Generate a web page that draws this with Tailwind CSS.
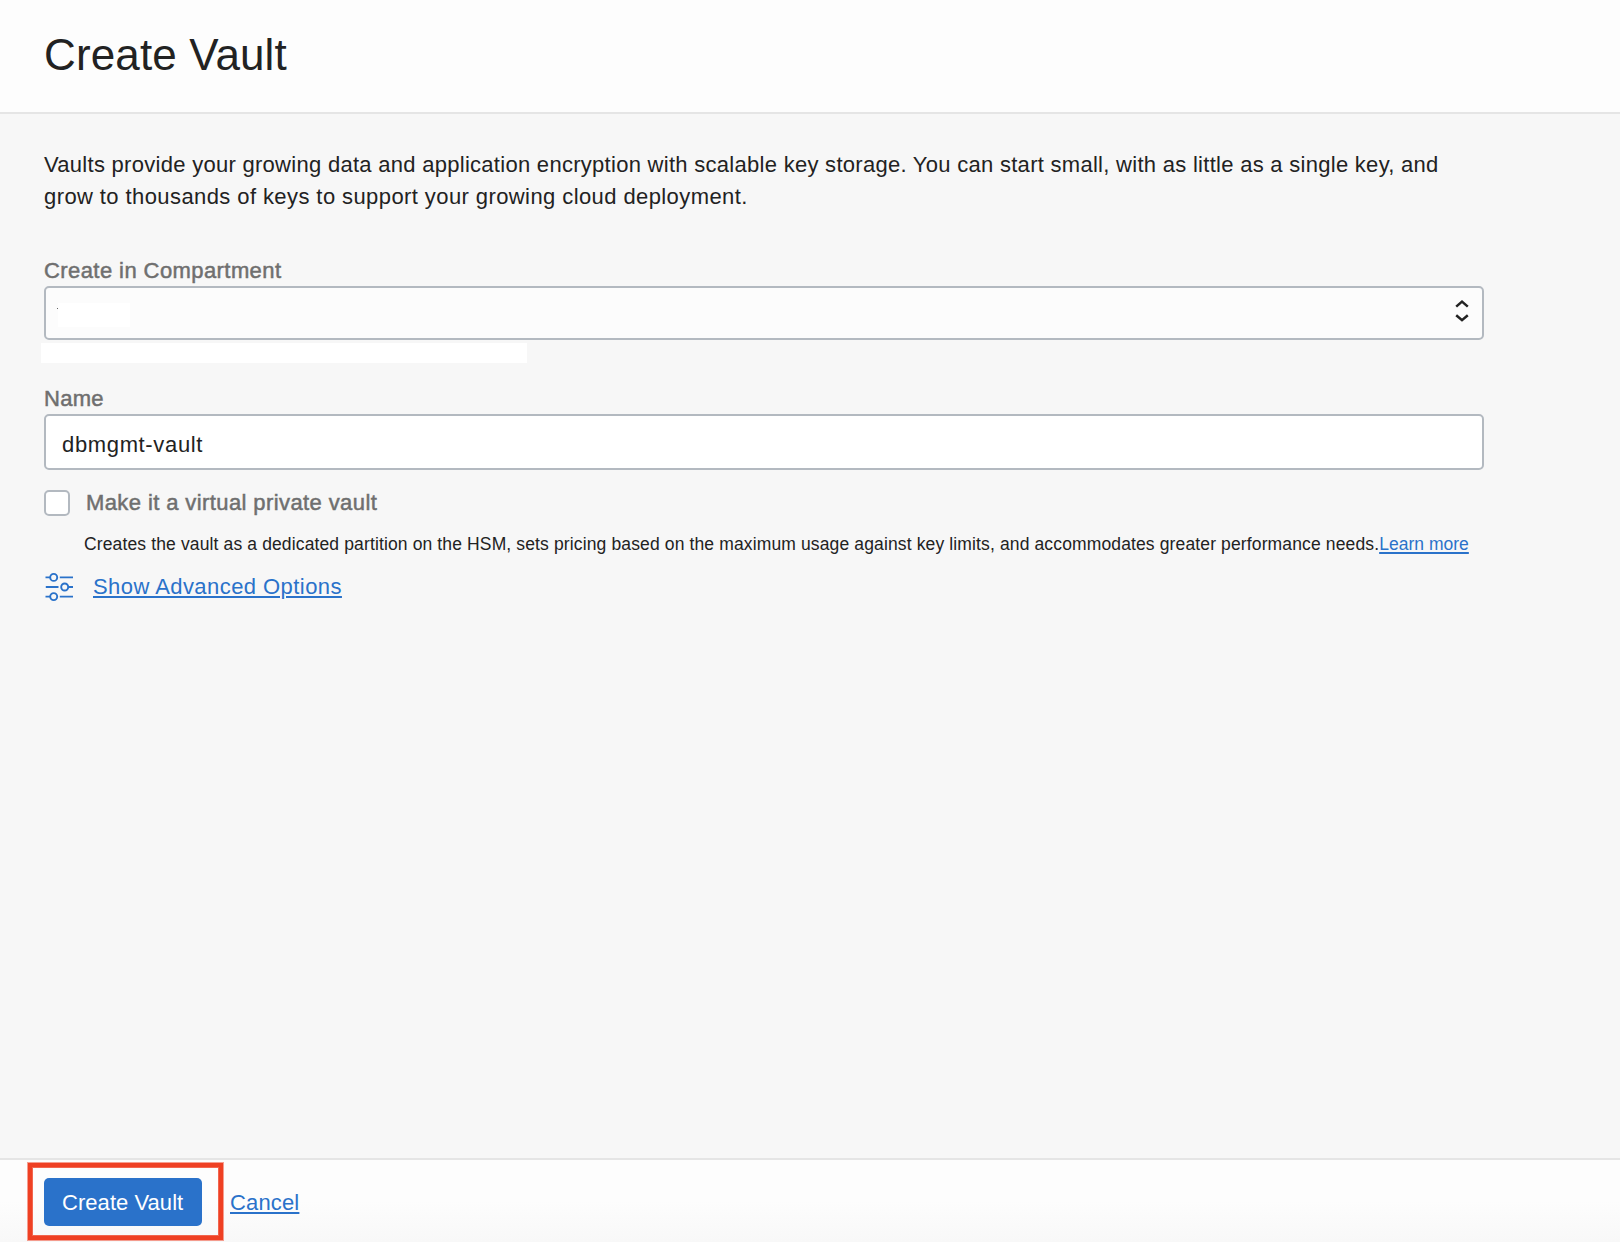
<!DOCTYPE html>
<html lang="en">
<head>
<meta charset="utf-8">
<title>Create Vault</title>
<script src="https://cdn.jsdelivr.net/npm/@tailwindcss/browser@4"></script>
</head>
<body class="relative flex h-[1242px] w-[1620px] flex-col overflow-hidden bg-[#f7f7f7] font-['Liberation_Sans',Arial,sans-serif] text-[22px] leading-8 text-[#222]">
  <header class="h-[114px] shrink-0 border-b-2 border-[#e5e5e5] bg-[#fdfdfd] pt-[31px] pl-11">
    <h1 class="text-[44px] leading-12 tracking-[0.13px]">Create Vault</h1>
  </header>

  <main class="flex-1 pt-[35px] pl-11">
    <p class="whitespace-nowrap"><span class="tracking-[0.283px]">Vaults provide your growing data and application encryption with scalable key storage. You can start small, with as little as a single key, and</span><br><span class="tracking-[0.41px]">grow to thousands of keys to support your growing cloud deployment.</span></p>

    <!-- Compartment picker -->
    <div class="mt-[42px] h-[31px] tracking-[0.42px] text-[#6f6f6f] [-webkit-text-stroke:0.5px_#6f6f6f]">Create in Compartment</div>
    <div class="flex h-[54px] w-[1440px] rounded-[5px] border-2 border-[#b3b9c0] bg-[#fcfcfc] pr-[13px] pl-[11px]">
      <div class="mt-5 h-px w-px bg-[#666]"></div>
      <div class="mt-[15px] h-6 w-[72px] bg-white"></div>
      <svg class="mt-[11px] ml-auto h-6 w-[14px]" viewBox="0 0 14 24" fill="none" stroke="#222" stroke-width="2.5">
        <path d="M1.2 7.6 7 2.6 12.8 7.6M1.2 16.2 7 21.2 12.8 16.2"/>
      </svg>
    </div>
    <div class="mt-[3px] -ml-[3px] h-5 w-[486px] bg-white"></div>

    <!-- Vault name -->
    <div class="mt-5 h-[31px] tracking-[0.3px] text-[#6f6f6f] [-webkit-text-stroke:0.5px_#6f6f6f]">Name</div>
    <div class="h-14 w-[1440px] rounded-[5px] border-2 border-[#b3b9c0] bg-white pt-[13px] pl-4 tracking-[0.65px]">dbmgmt-vault</div>

    <div class="mt-5 flex h-[26px] gap-4">
      <div class="h-[26px] w-[26px] rounded-[5px] border-2 border-[#b3b9c0] bg-white"></div>
      <div class="-mt-[3px] tracking-[0.4px] text-[#6f6f6f] [-webkit-text-stroke:0.5px_#6f6f6f]">Make it a virtual private vault</div>
    </div>
    <p class="mt-4 h-6 pl-10 text-[17.5px] leading-6 whitespace-nowrap"><span class="tracking-[0.132px]">Creates the vault as a dedicated partition on the HSM, sets pricing based on the maximum usage against key limits, and accommodates greater performance needs.</span><a class="tracking-[0.02px] text-[#2a72ca] underline decoration-2 underline-offset-2">Learn more</a></p>

    <div class="mt-[15px] flex gap-[19px] text-[#2a72ca]">
      <svg class="mt-px h-[30px] w-[30px]" viewBox="0 0 30 30" fill="none" stroke="#2a72ca" stroke-width="1.9">
        <path d="M1.5 5.4H6M15.8 5.4H29M1.8 15H14.5M24.6 15H29M1.5 24.6H6M15.8 24.6H29"/>
        <circle cx="9.7" cy="5.4" r="3.5"/><circle cx="20.7" cy="15" r="3.5"/><circle cx="9.7" cy="24.6" r="3.5"/>
      </svg>
      <a class="tracking-[0.44px] underline decoration-2 underline-offset-2">Show Advanced Options</a>
    </div>
  </main>

  <footer class="flex h-21 shrink-0 border-t-2 border-[#e5e5e5] bg-gradient-to-b from-[#fdfdfd] from-50% to-[#f8f8f8] pt-[18px] pl-11">
    <div class="h-12 w-[158px] rounded-[5px] bg-[#2a72ca] pt-[9px] pl-[18px] tracking-[0.05px] text-white">Create Vault</div>
    <a class="mt-[9px] ml-7 h-8 tracking-[0.15px] text-[#2a72ca] underline decoration-2 underline-offset-2">Cancel</a>
  </footer>

  <!-- Callout frame over the primary button -->
  <div class="absolute top-[1163px] left-7 h-[77px] w-[195px] border-4 border-[#ef4023] shadow-[0_0_0_1px_#ef402380,inset_0_0_0_1px_#ef4023cc]"></div>
</body>
</html>
